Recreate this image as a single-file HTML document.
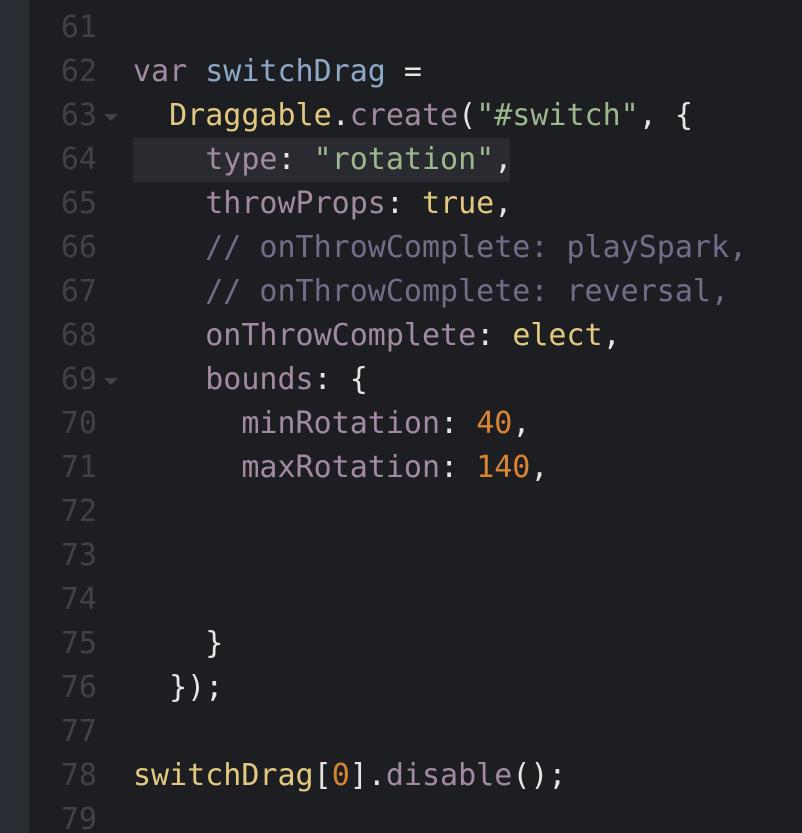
<html><head><style>
html,body{margin:0;width:802px;height:833px;background:#1d1e22;overflow:hidden;font-family:"DejaVu Sans Mono","Liberation Mono",monospace;font-size:30px;}
.g{position:absolute;left:0;top:0;width:29px;height:833px;background:#2b2d35}
.l{position:absolute;left:0;height:44px;line-height:44px;white-space:pre;width:802px}
.n{position:absolute;left:40px;width:57px;text-align:right;color:#404248}
.c{position:absolute;left:133px;color:#e6e6e6}
.a{position:absolute;left:104px;top:20px;width:0;height:0;border-left:7px solid transparent;border-right:7px solid transparent;border-top:7px solid #404248}
.hl{position:absolute;left:133px;top:138px;width:377px;height:44px;background:#2a2b30}
.k{color:#a28aa2}.b{color:#8ea9c8}.y{color:#e3c97f}.s{color:#9db78e}.m{color:#6f6f8a}.o{color:#d98432}
</style></head><body>
<div class="g"></div>
<div class="hl"></div>
<div class="l" style="top:6px"><span class="n">61</span></div>
<div class="l" style="top:50px"><span class="n">62</span><span class="c"><span class="k">var</span> <span class="b">switchDrag</span> =</span></div>
<div class="l" style="top:94px"><span class="n">63</span><span class="a"></span><span class="c">  <span class="y">Draggable</span>.<span class="k">create</span>(<span class="s">"#switch"</span>, {</span></div>
<div class="l" style="top:138px"><span class="n">64</span><span class="c">    <span class="k">type</span>: <span class="s">"rotation"</span>,</span></div>
<div class="l" style="top:182px"><span class="n">65</span><span class="c">    <span class="k">throwProps</span>: <span class="y">true</span>,</span></div>
<div class="l" style="top:226px"><span class="n">66</span><span class="c">    <span class="m">// onThrowComplete: playSpark,</span></span></div>
<div class="l" style="top:270px"><span class="n">67</span><span class="c">    <span class="m">// onThrowComplete: reversal,</span></span></div>
<div class="l" style="top:314px"><span class="n">68</span><span class="c">    <span class="k">onThrowComplete</span>: <span class="y">elect</span>,</span></div>
<div class="l" style="top:358px"><span class="n">69</span><span class="a"></span><span class="c">    <span class="k">bounds</span>: {</span></div>
<div class="l" style="top:402px"><span class="n">70</span><span class="c">      <span class="k">minRotation</span>: <span class="o">40</span>,</span></div>
<div class="l" style="top:446px"><span class="n">71</span><span class="c">      <span class="k">maxRotation</span>: <span class="o">140</span>,</span></div>
<div class="l" style="top:490px"><span class="n">72</span></div>
<div class="l" style="top:534px"><span class="n">73</span></div>
<div class="l" style="top:578px"><span class="n">74</span></div>
<div class="l" style="top:622px"><span class="n">75</span><span class="c">    }</span></div>
<div class="l" style="top:666px"><span class="n">76</span><span class="c">  });</span></div>
<div class="l" style="top:710px"><span class="n">77</span></div>
<div class="l" style="top:754px"><span class="n">78</span><span class="c"><span class="y">switchDrag</span>[<span class="o">0</span>].<span class="k">disable</span>();</span></div>
<div class="l" style="top:798px"><span class="n">79</span></div>
</body></html>
